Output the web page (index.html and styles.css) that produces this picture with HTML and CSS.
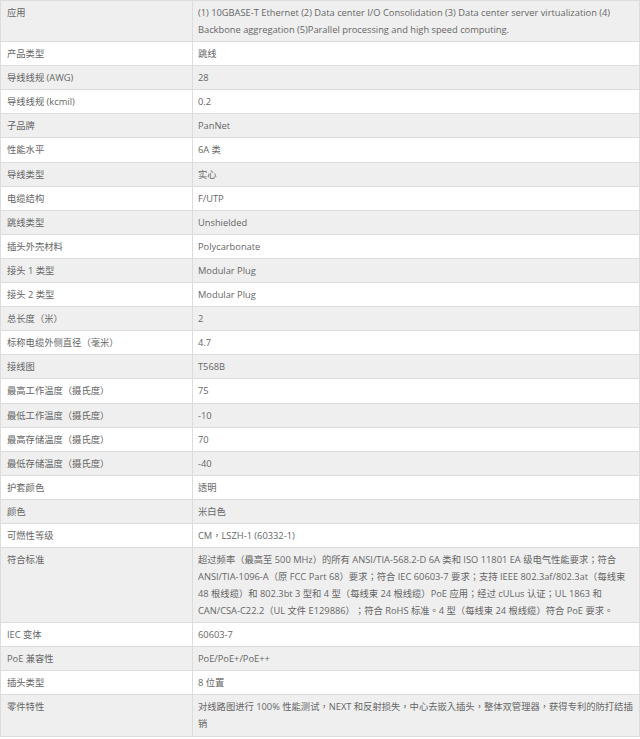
FILE: index.html
```html
<!DOCTYPE html>
<html lang="zh-TW">
<head>
<meta charset="utf-8">
<link rel="stylesheet" href="styles.css">
</head>
<body>
<table class="spec">
<tbody>
<tr><td class="k">应用</td><td class="v">(1) 10GBASE-T Ethernet (2) Data center I/O Consolidation (3) Data center server virtualization (4)<br>Backbone aggregation (5)Parallel processing and high speed computing.</td></tr>
<tr><td class="k">产品类型</td><td class="v">跳线</td></tr>
<tr><td class="k">导线线规 (AWG)</td><td class="v">28</td></tr>
<tr><td class="k">导线线规 (kcmil)</td><td class="v">0.2</td></tr>
<tr><td class="k">子品牌</td><td class="v">PanNet</td></tr>
<tr><td class="k">性能水平</td><td class="v">6A 类</td></tr>
<tr><td class="k">导线类型</td><td class="v">实心</td></tr>
<tr><td class="k">电缆结构</td><td class="v">F/UTP</td></tr>
<tr><td class="k">跳线类型</td><td class="v">Unshielded</td></tr>
<tr><td class="k">插头外壳材料</td><td class="v">Polycarbonate</td></tr>
<tr><td class="k">接头 1 类型</td><td class="v">Modular Plug</td></tr>
<tr><td class="k">接头 2 类型</td><td class="v">Modular Plug</td></tr>
<tr><td class="k">总长度（米）</td><td class="v">2</td></tr>
<tr><td class="k">标称电缆外侧直径（毫米）</td><td class="v">4.7</td></tr>
<tr><td class="k">接线图</td><td class="v">T568B</td></tr>
<tr><td class="k">最高工作温度（摄氏度）</td><td class="v">75</td></tr>
<tr><td class="k">最低工作温度（摄氏度）</td><td class="v">-10</td></tr>
<tr><td class="k">最高存储温度（摄氏度）</td><td class="v">70</td></tr>
<tr><td class="k">最低存储温度（摄氏度）</td><td class="v">-40</td></tr>
<tr><td class="k">护套颜色</td><td class="v">透明</td></tr>
<tr><td class="k">颜色</td><td class="v">米白色</td></tr>
<tr><td class="k">可燃性等级</td><td class="v">CM，LSZH-1 (60332-1)</td></tr>
<tr><td class="k">符合标准</td><td class="v">超过频率（最高至 500 MHz）的所有 ANSI/TIA-568.2-D 6A 类和 ISO 11801 EA 级电气性能要求；符合<br>ANSI/TIA-1096-A（原 FCC Part 68）要求；符合 IEC 60603-7 要求；支持 IEEE 802.3af/802.3at（每线束<br>48 根线缆）和 802.3bt 3 型和 4 型（每线束 24 根线缆）PoE 应用；经过 cULus 认证；UL 1863 和<br>CAN/CSA-C22.2（UL 文件 E129886）；符合 RoHS 标准。4 型（每线束 24 根线缆）符合 PoE 要求。</td></tr>
<tr><td class="k">IEC 变体</td><td class="v">60603-7</td></tr>
<tr><td class="k">PoE 兼容性</td><td class="v">PoE/PoE+/PoE++</td></tr>
<tr><td class="k">插头类型</td><td class="v">8 位置</td></tr>
<tr><td class="k">零件特性</td><td class="v">对线路图进行 100% 性能测试，NEXT 和反射损失，中心去嵌入插头，整体双管理器，获得专利的防打结插<br>销</td></tr>
</tbody>
</table>
</body>
</html>
```

FILE: styles.css
```css
html, body {
  margin: 0;
  padding: 0;
  background: #ffffff;
}

.spec {
  width: 640px;
  border-collapse: collapse;
  font-family: "Open Sans", "Noto Sans CJK TC", sans-serif;
  font-size: 9.3px;
  line-height: 17px;
  color: #666666;
  text-spacing-trim: space-all;
}

.spec td {
  border: 1px solid #dcdcdc;
  padding: 3px 6px 3.1px 6px;
  vertical-align: top;
  text-align: left;
}

.spec tr:nth-child(odd) td {
  background: #efefef;
}

.spec .k {
  width: 179px;
}

.spec .v {
  padding-left: 5px;
  white-space: nowrap;
}
```
